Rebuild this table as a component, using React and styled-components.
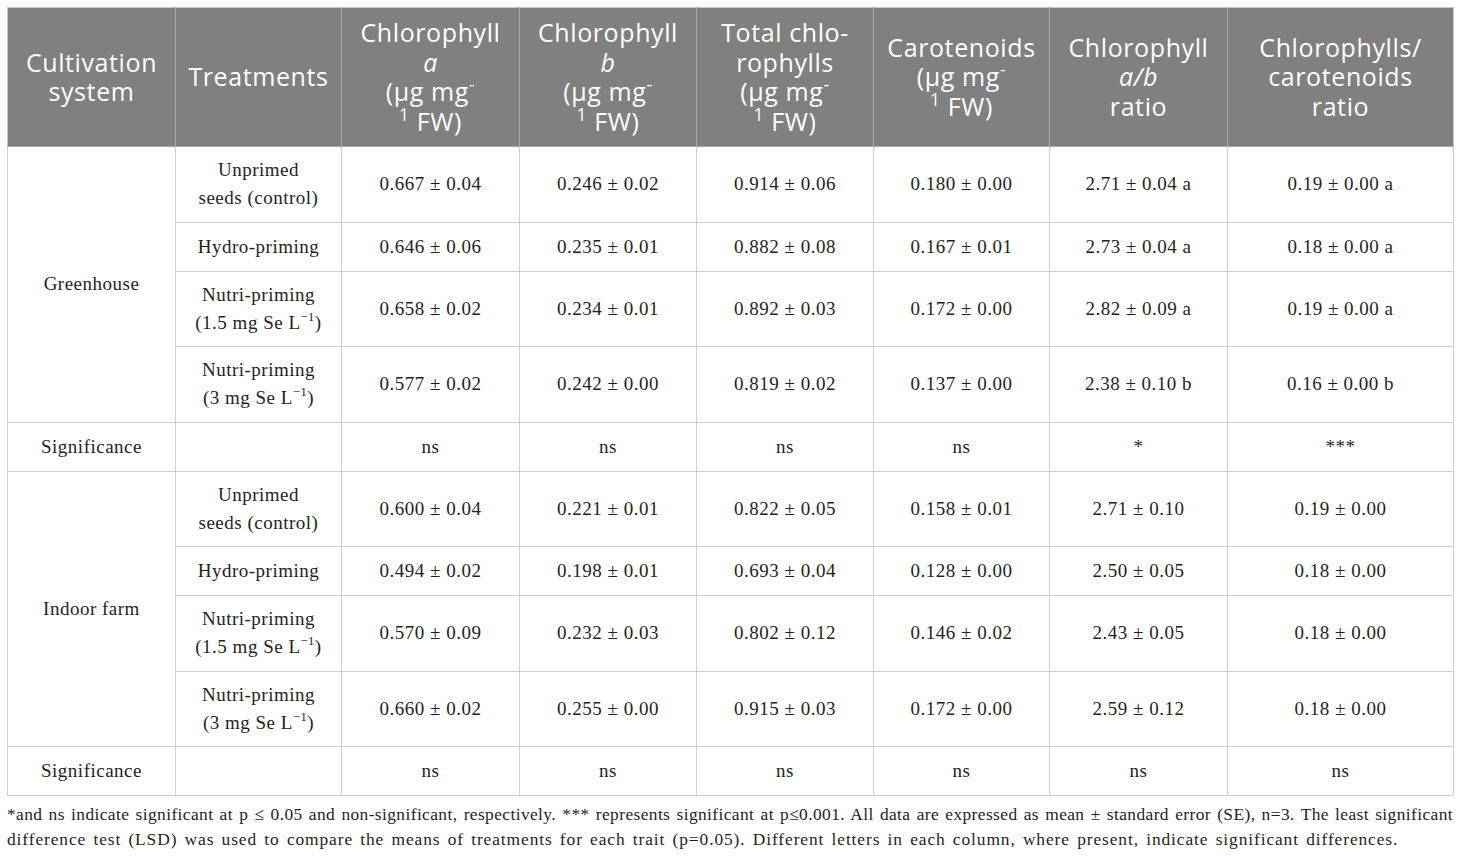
import React from "react";
import styled, { createGlobalStyle } from "styled-components";

const GlobalStyle = createGlobalStyle`
  body {
    margin: 0;
    background: #fff;
  }
`;

const Page = styled.div`
  padding: 7px 7px 0 7px;
  width: 1446px;
`;

const Table = styled.table`
  width: 1446px;
  border-collapse: collapse;
  table-layout: fixed;
  font-family: "Liberation Serif", "Times New Roman", serif;
  color: #231f20;
`;

const HeadCell = styled.th`
  background: #808080;
  color: #fff;
  font-family: "Open Sans", "Noto Sans", sans-serif;
  font-weight: 400;
  font-size: 25px;
  letter-spacing: 0.6px;
  line-height: 29.5px;
  height: 138px;
  padding: 0 2px;
  text-align: center;
  vertical-align: middle;
  border: 1px solid #a9a9a9;
  border-top-color: #c8c8c8;

  &:first-child {
    border-left-color: #c8c8c8;
  }
  &:last-child {
    border-right-color: #c8c8c8;
  }

  em {
    font-style: italic;
  }

  sup {
    font-size: 0.7em;
    line-height: 0;
    vertical-align: 0.55em;
  }
`;

const Cell = styled.td`
  border: 1px solid #cfcfcf;
  text-align: center;
  vertical-align: middle;
  font-size: 19px;
  letter-spacing: 0.5px;
  line-height: 28px;
  padding: 0 4px;
  height: ${(p) => (p.$tall ? "74.5px" : "48px")};

  sup {
    font-size: 0.66em;
    line-height: 0;
    vertical-align: 0.6em;
  }
`;

const Note = styled.div`
  margin: 6px 0 0 0;
  font-family: "Liberation Serif", "Times New Roman", serif;
  font-size: 17.4px;
  line-height: 25px;
  color: #231f20;
`;

const NoteLine = styled.span`
  display: block;
  text-align: ${(p) => (p.$justify ? "justify" : "left")};
  text-align-last: ${(p) => (p.$justify ? "justify" : "left")};
  letter-spacing: ${(p) => (p.$justify ? "0.4px" : "0.9px")};
  word-spacing: ${(p) => (p.$justify ? "0" : "2px")};
`;

const headers = [
  <>Cultivation<br />system</>,
  <>Treatments</>,
  <>Chlorophyll<br /><em>a</em><br />(μg mg<sup>-</sup><br /><sup>1</sup> FW)</>,
  <>Chlorophyll<br /><em>b</em><br />(μg mg<sup>-</sup><br /><sup>1</sup> FW)</>,
  <>Total chlo-<br />rophylls<br />(μg mg<sup>-</sup><br /><sup>1</sup> FW)</>,
  <>Carotenoids<br />(μg mg<sup>-</sup><br /><sup>1</sup> FW)</>,
  <>Chlorophyll<br /><em>a/b</em><br />ratio</>,
  <>Chlorophylls/<br />carotenoids<br />ratio</>,
];

const widths = [168, 166, 178, 177, 177, 176, 178, 226];

const treatments = [
  { label: <>Unprimed<br />seeds (control)</>, tall: true },
  { label: <>Hydro-priming</>, tall: false },
  { label: <>Nutri-priming<br />(1.5 mg Se L<sup>−1</sup>)</>, tall: true },
  { label: <>Nutri-priming<br />(3 mg Se L<sup>−1</sup>)</>, tall: true },
];

const groups = [
  {
    name: "Greenhouse",
    rows: [
      ["0.667 ± 0.04", "0.246 ± 0.02", "0.914 ± 0.06", "0.180 ± 0.00", "2.71 ± 0.04 a", "0.19 ± 0.00 a"],
      ["0.646 ± 0.06", "0.235 ± 0.01", "0.882 ± 0.08", "0.167 ± 0.01", "2.73 ± 0.04 a", "0.18 ± 0.00 a"],
      ["0.658 ± 0.02", "0.234 ± 0.01", "0.892 ± 0.03", "0.172 ± 0.00", "2.82 ± 0.09 a", "0.19 ± 0.00 a"],
      ["0.577 ± 0.02", "0.242 ± 0.00", "0.819 ± 0.02", "0.137 ± 0.00", "2.38 ± 0.10 b", "0.16 ± 0.00 b"],
    ],
    sig: ["ns", "ns", "ns", "ns", "*", "***"],
  },
  {
    name: "Indoor farm",
    rows: [
      ["0.600 ± 0.04", "0.221 ± 0.01", "0.822 ± 0.05", "0.158 ± 0.01", "2.71 ± 0.10", "0.19 ± 0.00"],
      ["0.494 ± 0.02", "0.198 ± 0.01", "0.693 ± 0.04", "0.128 ± 0.00", "2.50 ± 0.05", "0.18 ± 0.00"],
      ["0.570 ± 0.09", "0.232 ± 0.03", "0.802 ± 0.12", "0.146 ± 0.02", "2.43 ± 0.05", "0.18 ± 0.00"],
      ["0.660 ± 0.02", "0.255 ± 0.00", "0.915 ± 0.03", "0.172 ± 0.00", "2.59 ± 0.12", "0.18 ± 0.00"],
    ],
    sig: ["ns", "ns", "ns", "ns", "ns", "ns"],
  },
];

function Group({ group }) {
  return (
    <>
      {group.rows.map((row, i) => (
        <tr key={i}>
          {i === 0 && <Cell rowSpan={4}>{group.name}</Cell>}
          <Cell $tall={treatments[i].tall}>{treatments[i].label}</Cell>
          {row.map((v, j) => (
            <Cell key={j} $tall={treatments[i].tall}>{v}</Cell>
          ))}
        </tr>
      ))}
      <tr>
        <Cell>Significance</Cell>
        <Cell />
        {group.sig.map((s, j) => (
          <Cell key={j}>{s}</Cell>
        ))}
      </tr>
    </>
  );
}

export default function App() {
  return (
    <Page>
      <GlobalStyle />
      <Table>
        <colgroup>
          {widths.map((w, i) => (
            <col key={i} style={{ width: w }} />
          ))}
        </colgroup>
        <thead>
          <tr>
            {headers.map((h, i) => (
              <HeadCell key={i}>{h}</HeadCell>
            ))}
          </tr>
        </thead>
        <tbody>
          {groups.map((g) => (
            <Group key={g.name} group={g} />
          ))}
        </tbody>
      </Table>
      <Note>
        <NoteLine $justify>
          *and ns indicate significant at p ≤ 0.05 and non-significant, respectively. *** represents
          significant at p≤0.001. All data are expressed as mean ± standard error (SE), n=3. The
          least significant
        </NoteLine>
        <NoteLine>
          difference test (LSD) was used to compare the means of treatments for each trait
          (p=0.05). Different letters in each column, where present, indicate significant
          differences.
        </NoteLine>
      </Note>
    </Page>
  );
}
